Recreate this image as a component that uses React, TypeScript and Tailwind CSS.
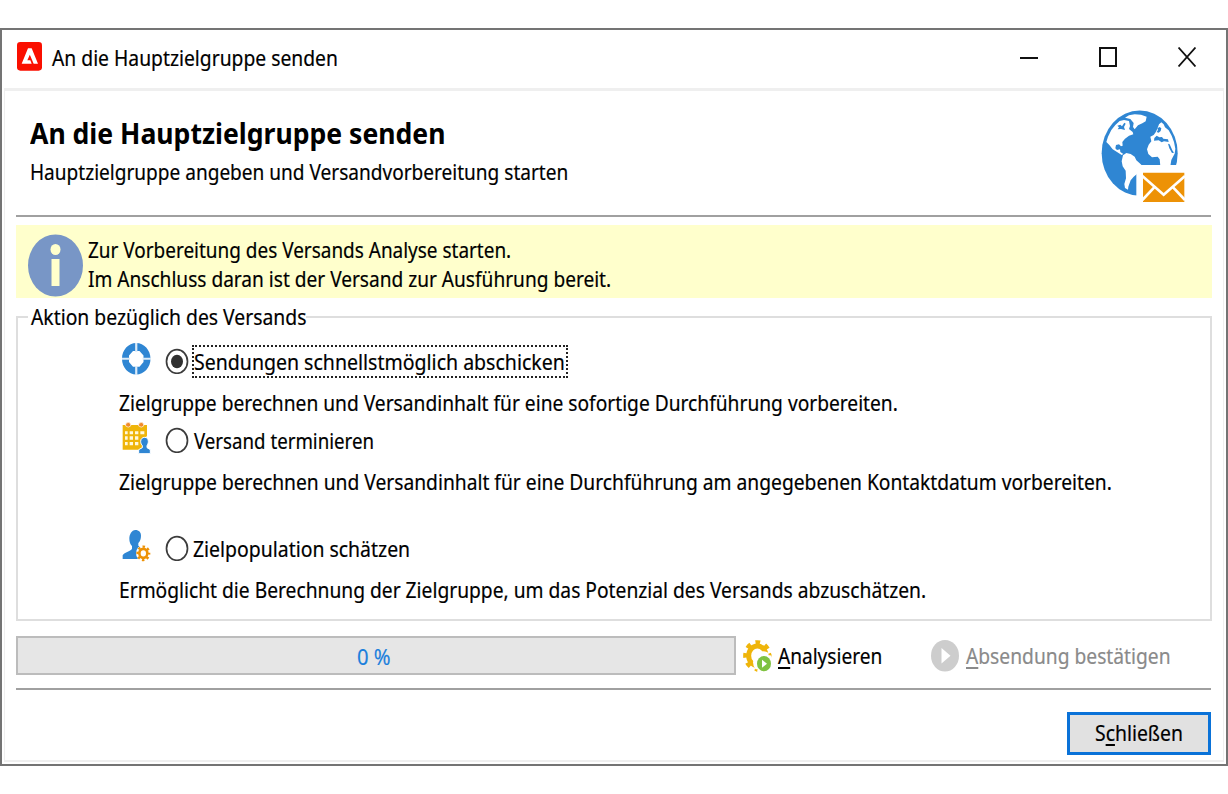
import type { ReactNode } from "react";

const BASE = "block w-max origin-left -translate-y-px whitespace-nowrap text-[22px] leading-[30px] [-webkit-text-stroke:0.2px] ";

function T({ className, children }: { className: string; children: ReactNode }) {
  return <span className={BASE + className}>{children}</span>;
}

function Key({ children }: { children: ReactNode }) {
  return <span className="underline decoration-2 underline-offset-[3px]">{children}</span>;
}

function AppLogo() {
  return (
    <svg width="25" height="29" viewBox="50 66 75 87" className="block">
      <rect x="50" y="66" width="75" height="86" rx="10" fill="#fa0f00" />
      <path d="M64 131 83 85h11l19 46h-13L88.500 104 81 121h9l4 10Z" fill="#fff" />
    </svg>
  );
}

function GlobeMail() {
  return (
    <svg width="86" height="94" viewBox="304 270 258 282" className="block">
      <ellipse cx="420" cy="399.500" rx="114" ry="128" fill="#2f86d3" />
      <g fill="#fff">
        <path d="M320 366 325 350 335 330 347 315 360 303 373 300 388 303 391 318 388 327 399 336 401 343 388 347 376 356 368 366 369 377 364 379 358 373 349 375 347 385 352 390 361 388 362 396 371 402 366 405 352 396 339 388 329 375Z" />
        <path d="M376 293 388 286 405 283 424 284 441 290 438 304 428 310 415 316 405 328 400 321 402 309 392 297Z" />
        <path d="M370 406 380 399 393 402 405 410 410 421 425 434 420 444 411 463 402 470 393 481 386 500 385 509 376 504 374 492 379 475 378 452 369 439 366 424Z" />
        <path d="M473 326 478 313 485 307 492 313 496 322 507 331 516 347 523 366 527 386 525 401 520 410 515 420 512 438 482 438 480 418 474 410 457 412 446 402 442 388 447 374 455 364 452 350 462 345 468 337Z" />
        <rect x="410" y="435" width="152" height="117" />
      </g>
      <g fill="#2f86d3">
        <path d="m353 317 9-3 5 5 7-11 4 3-5 10 3 9-12-3-10 1 4-6Z" />
        <path d="m464 354 7-7 8 5 8-1 4 5 14 2 2 8-14-2-7 3-9-6-14 1Z" />
        <path d="m473 325 7-4 5 4-2 8-6 5-6-2 4-6Z" />
        <path d="m505 371 5 2 8 18 5 7-6 1-8-14Z" />
      </g>
      <path d="M430 458h124v88H430Z" fill="#ed9206" />
      <path d="m428 468 64 56 64-56M428 540l35-37M556 540l-35-37" stroke="#fff" strokeWidth="8" fill="none" />
    </svg>
  );
}

function InfoIcon() {
  return (
    <svg width="56" height="63" viewBox="0 0 56 63" className="block">
      <ellipse cx="27.500" cy="31.500" rx="27.500" ry="31" fill="#7896c6" />
      <ellipse cx="27.500" cy="15.500" rx="5" ry="5.500" fill="#ffffcc" />
      <path d="M23.500 25h8v27h-8Z" fill="#ffffcc" />
    </svg>
  );
}

function RingIcon() {
  return (
    <svg width="29" height="32" viewBox="0 0 29 32" className="block">
      <path fillRule="evenodd" fill="#2f86d3" d="M14.250 0C22 0 28.500 7 28.500 15.750S22 31.500 14.250 31.500 0 24.500 0 15.750 6.400 0 14.250 0ZM11 8 7 12.500v6.500l4 4.700h6.500l4-4.700v-6.500L17.500 8Z" />
      <path d="M14.250 0v9M14.250 23v9M0 15.750h8M20.500 15.750H29" stroke="#dcebf8" strokeWidth="2.200" />
    </svg>
  );
}

function CalendarIcon() {
  return (
    <svg width="29" height="32" viewBox="66 275 87 96" className="block">
      <path d="M68 284h73v34l-10 4-7 8v11l5 9-12 8H68Z" fill="#efb50a" />
      <path d="M75 303h8v9h-8ZM89 303h10v9H89ZM105 303h10v9h-10ZM121 303h12v9h-12ZM75 318h8v10h-8ZM89 318h10v10H89ZM105 318h10v10h-10ZM75 335h8v10h-8ZM89 335h10v10H89ZM105 335h10v10h-10Z" fill="#fff8dd" />
      <path d="M77 280q8-8 15 0v7q-7 7-15 0ZM116 280q8-8 15 0v7q-7 7-15 0Z" fill="#f08a2a" stroke="#fff" strokeWidth="2" />
      <path d="M134 321c7 0 11 5 11 12 0 6-2 10-4 13v6l10 6v12h-35v-12l11-6v-6c-3-3-5-7-5-13 0-7 5-12 12-12Z" fill="#2f86d3" stroke="#fff" strokeWidth="3" />
    </svg>
  );
}

function PersonGearIcon() {
  return (
    <svg width="29" height="32" viewBox="66 90 87 96" className="block">
      <path d="M106 90c11 0 17 7 17 17 0 10-3 17-8 22v8l14 10-16 30H68v-11c3-9 24-12 28-20v-8c-5-5-8-12-8-22 0-12 7-26 18-26Z" fill="#2f86d3" />
      <ellipse cx="130" cy="160" rx="22" ry="25" fill="#fff" />
      <ellipse cx="130" cy="160" rx="17.500" ry="20" fill="none" stroke="#ed9206" strokeWidth="7" strokeDasharray="7.400 7.350" strokeDashoffset="3.700" />
      <ellipse cx="130" cy="160" rx="12" ry="13.500" fill="none" stroke="#ed9206" strokeWidth="8" />
    </svg>
  );
}

function AnalyseIcon() {
  return (
    <svg width="29" height="32" viewBox="67 90 87 96" className="block">
      <ellipse cx="110" cy="137" rx="36" ry="40" fill="none" stroke="#efb50a" strokeWidth="13" strokeDasharray="14 15.900" strokeDashoffset="7" />
      <ellipse cx="110" cy="137" rx="26" ry="29" fill="none" stroke="#efb50a" strokeWidth="15" />
      <ellipse cx="127" cy="157" rx="30" ry="33" fill="#fff" />
      <path d="m143 131 8-3v8h-7ZM103 178h8l-2 7-5-2Z" fill="#efb50a" />
      <ellipse cx="130" cy="161" rx="21" ry="23" fill="#7fc241" />
      <path d="m124 149 15 12-15 12Z" fill="#fff" />
    </svg>
  );
}

function ConfirmIcon() {
  return (
    <svg width="28" height="32" viewBox="0 0 28 32" className="block">
      <ellipse cx="14" cy="15.750" rx="14" ry="15.750" fill="#cdcdcd" />
      <path d="M10.500 8 19.500 15.800 10.500 23.500Z" fill="#fff" />
    </svg>
  );
}

function Radio({ checked }: { checked?: boolean }) {
  return (
    <svg width="24" height="26" viewBox="0 0 24 26" className="block">
      <ellipse cx="12" cy="13.500" rx="10.500" ry="11.800" fill="#fff" stroke="#3c3c3c" strokeWidth="1.700" />
      {checked && <ellipse cx="12" cy="13.500" rx="6" ry="6.700" fill="#303030" />}
    </svg>
  );
}

function Option({ icon, checked, children }: { icon: ReactNode; checked?: boolean; children: ReactNode }) {
  return (
    <div className="flex h-12 items-start pl-[104px]">
      <div className="w-[43px] shrink-0 pt-[3px]">{icon}</div>
      <div className="w-[27px] shrink-0 pt-2">
        <Radio checked={checked} />
      </div>
      {children}
    </div>
  );
}

export default function App() {
  return (
    <div className="h-[794px] w-[1228px] overflow-hidden bg-white pt-7 font-['Noto_Sans','Open_Sans',sans-serif] text-black">
      <div className="flex h-[738px] flex-col border-2 border-[#747474] bg-white">
        <div className="flex h-[58px] shrink-0 items-start">
          <div className="w-[50px] pt-3 pl-[15px]">
            <AppLogo />
          </div>
          <div className="flex-1 pt-[13px]">
            <T className="scale-x-[0.877]">An die Hauptzielgruppe senden</T>
          </div>
          <div className="flex gap-[61px] pt-[17px] pr-[30px]">
            <svg width="18" height="20" viewBox="0 0 18 20">
              <path d="M0 11h18" stroke="#111" strokeWidth="2" />
            </svg>
            <svg width="18" height="20" viewBox="0 0 18 20">
              <path d="M1 1h16v18H1Z" fill="none" stroke="#111" strokeWidth="2" />
            </svg>
            <svg width="18" height="20" viewBox="0 0 18 20">
              <path d="m.5.500 17 19m0-19-17 19" stroke="#111" strokeWidth="1.800" />
            </svg>
          </div>
        </div>

        <div className="mx-0.5 flex h-[674px] shrink-0 flex-col border-x border-t-[3px] border-b-2 border-[#efefef] pr-3 pl-[11px]">
          <div className="flex h-[124px] shrink-0 justify-between pl-[14px]">
            <div className="pt-[23px]">
              <h1 className="w-max origin-left scale-x-[0.949] text-[28px] leading-[38px] font-bold whitespace-nowrap">
                An die Hauptzielgruppe senden
              </h1>
              <T className="mt-[5px] scale-x-[0.866]">Hauptzielgruppe angeben und Versandvorbereitung starten</T>
            </div>
            <div className="pt-[19px] pr-6">
              <GlobeMail />
            </div>
          </div>
          <div className="h-0.5 shrink-0 bg-[#a0a0a0]" />

          <div className="mt-2 -mr-px flex h-[73px] shrink-0 bg-[#ffffcc] pl-3">
            <div className="w-[60px] shrink-0 pt-[9px]">
              <InfoIcon />
            </div>
            <div className="pt-[10px]">
              <T className="h-[29px] scale-x-[0.8615]">Zur Vorbereitung des Versands Analyse starten.</T>
              <T className="h-[29px] scale-x-[0.868]">Im Anschluss daran ist der Versand zur Ausführung bereit.</T>
            </div>
          </div>

          <fieldset className="mt-1 -mr-px h-[319px] min-w-0 shrink-0 border-2 border-[#dedede]">
            <legend className="ml-[10px] h-[30px] w-[278px] pl-[3px]">
              <T className="scale-x-[0.8786]">Aktion bezüglich des Versands</T>
            </legend>
            <div className="pt-2">
              <Option icon={<RingIcon />} checked>
                <div className="mt-[5px] h-[33px] w-[376px] shrink-0 border-2 border-dotted border-[#222]">
                  <T className="scale-x-[0.8876]">Sendungen schnellstmöglich abschicken</T>
                </div>
              </Option>
              <T className="ml-[101px] scale-x-[0.872]">
                Zielgruppe berechnen und Versandinhalt für eine sofortige Durchführung vorbereiten.
              </T>
            </div>
            <div className="pt-px">
              <Option icon={<CalendarIcon />}>
                <T className="mt-[7px] ml-0.5 scale-x-[0.849]">Versand terminieren</T>
              </Option>
              <T className="ml-[101px] scale-x-[0.874]">
                Zielgruppe berechnen und Versandinhalt für eine Durchführung am angegebenen Kontaktdatum vorbereiten.
              </T>
            </div>
            <div className="pt-[30px]">
              <Option icon={<PersonGearIcon />}>
                <T className="mt-[7px] ml-px scale-x-[0.883]">Zielpopulation schätzen</T>
              </Option>
              <T className="ml-[101px] scale-x-[0.874]">
                Ermöglicht die Berechnung der Zielgruppe, um das Potenzial des Versands abzuschätzen.
              </T>
            </div>
          </fieldset>

          <div className="mt-[15px] flex h-[39px] shrink-0 items-start">
            <div className="h-[39px] w-[720px] border-2 border-[#bcbcbc] bg-[#e6e6e6] pt-1 pl-[339px] text-[#1b7fdc]">
              <T className="scale-x-[0.919]">0 %</T>
            </div>
            <div className="flex w-[195px] pl-[7px]">
              <div className="w-[35px] pt-1">
                <AnalyseIcon />
              </div>
              <T className="mt-[5px] scale-x-[0.867]">
                <Key>A</Key>nalysieren
              </T>
            </div>
            <div className="flex text-[#8a8a8a]">
              <div className="w-[35px] pt-1">
                <ConfirmIcon />
              </div>
              <T className="mt-[5px] scale-x-[0.874]">
                <Key>A</Key>bsendung bestätigen
              </T>
            </div>
          </div>

          <div className="mt-[13px] h-0.5 shrink-0 bg-[#a0a0a0]" />
          <div className="mt-[22px] flex justify-end">
            <button className="h-[43px] w-[144px] border-[3px] border-[#0a72d8] bg-[#e1e1e1] pb-[2px] pl-[25px] text-left">
              <T className="scale-x-[0.88]">
                S<Key>c</Key>hließen
              </T>
            </button>
          </div>
        </div>
      </div>
    </div>
  );
}
